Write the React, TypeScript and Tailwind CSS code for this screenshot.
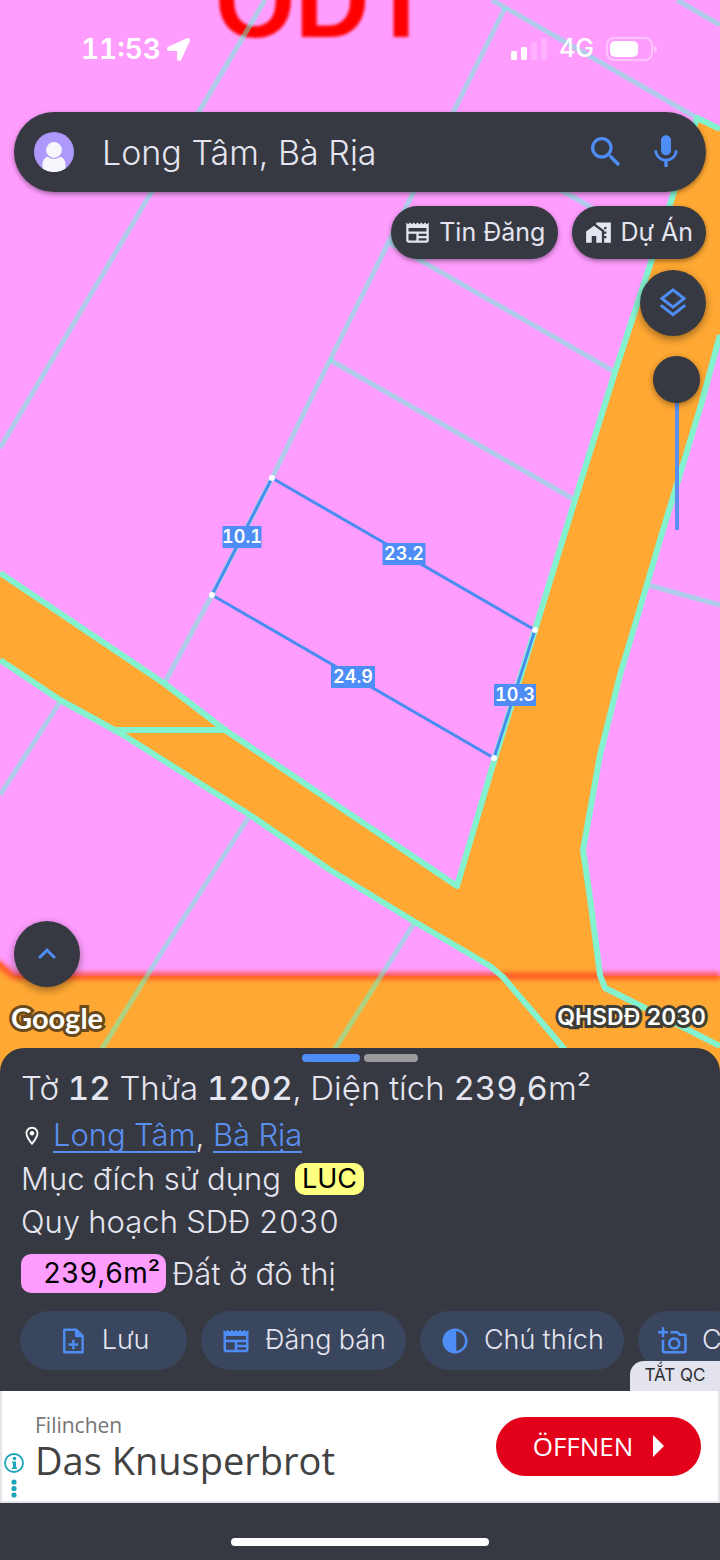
import type { ReactNode } from 'react';
import { FaLocationArrow } from 'react-icons/fa';
import {
  MdContrast,
  MdHomeWork,
  MdKeyboardArrowUp,
  MdMic,
  MdNewspaper,
  MdOutlineAddAPhoto,
  MdOutlineLayers,
  MdOutlineLocationOn,
  MdSearch,
} from 'react-icons/md';

const parcelLines = [
  'M265 0L0 448',
  'M505 8L330 360L272 478L212 595L165 682',
  'M492 0L697 118',
  'M677 0L720 25',
  'M447 125L657 245',
  'M390 243L615 372',
  'M330 360L575 500',
  'M60 702L0 795',
  'M250 815L160 955L100 1052',
  'M415 922L333 1052',
  'M648 585L720 605',
];

const roadEdges = [
  'M720 129L697 118L673 195L615 372L575 500L535 630L495 758L457 886L225 730L165 684L0 573',
  'M720 335L701 405L660 540L640 608L620 675L600 755L583 850L591 905L600 975L605 988L645 1008L720 1046',
  'M0 660L60 700L120 733L250 815L330 870L415 922L490 966L503 977L567 1052',
  'M112 730L228 730',
];

const corners = [
  [272, 478],
  [535, 630],
  [494, 758],
  [212, 595],
];

const sideLengths = [
  { x: 242, y: 537, w: 39, text: '10.1' },
  { x: 404, y: 554, w: 43, text: '23.2' },
  { x: 353, y: 677, w: 44, text: '24.9' },
  { x: 515, y: 695, w: 42, text: '10.3' },
];

function ParcelMap() {
  return (
    <svg
      className="absolute inset-0 h-full w-full"
      viewBox="0 0 720 1048"
      preserveAspectRatio="xMidYMin slice"
      role="img"
      aria-label="Bản đồ thửa đất"
    >
      <defs>
        <filter id="soft" x="-5%" y="-50%" width="110%" height="200%">
          <feGaussianBlur stdDeviation="2.5" />
        </filter>
        <filter id="softText">
          <feGaussianBlur stdDeviation="1.8" />
        </filter>
      </defs>
      <rect width="720" height="1080" fill="#ff9dff" />
      <text
        x="215"
        y="37"
        fontFamily="Liberation Sans, sans-serif"
        fontWeight="700"
        fontSize="103"
        fill="#ff0000"
        filter="url(#softText)"
      >
        ODT
      </text>
      <g fill="#ffa833">
        <path d="M697 118L720 129V335L701 405L660 540L640 608L620 675L600 755L583 850L591 905L600 975L610 1080H560L503 977L490 966L415 922L330 870L250 815L120 733L60 700L0 660V573L165 684L225 730L457 886L495 758L615 372L673 195Z" />
        <path d="M0 962L14 976H720V1080H0Z" />
      </g>
      <path d="M-10 960L0 965L14 976H720" fill="none" stroke="#ff4a28" strokeWidth="7" opacity="0.85" filter="url(#soft)" />
      <g fill="none" stroke="#5affd3" strokeOpacity="0.48" strokeWidth="5" strokeLinejoin="round">
        {parcelLines.map((d) => (
          <path key={d} d={d} />
        ))}
      </g>
      <g fill="none" stroke="#84f2cf" strokeWidth="6" strokeLinejoin="round">
        {roadEdges.map((d) => (
          <path key={d} d={d} />
        ))}
      </g>
      <path d="M272 478L535 630L494 758L212 595Z" fill="none" stroke="#4a8df0" strokeWidth="3" />
      {corners.map(([x, y]) => (
        <circle key={x} cx={x} cy={y} r="3" fill="#fff" />
      ))}
      {sideLengths.map((s) => (
        <g key={s.text}>
          <rect x={s.x - s.w / 2} y={s.y - 11} width={s.w} height="22" fill="#4f8df6" />
          <text
            x={s.x}
            y={s.y + 6}
            textAnchor="middle"
            fontFamily="Inter, sans-serif"
            fontWeight="600"
            fontSize="18"
            className="tabular-nums"
            fill="#fff"
          >
            {s.text}
          </text>
        </g>
      ))}
    </svg>
  );
}

function StatusBar() {
  return (
    <div className="flex h-[98px] items-center justify-between pr-[62px] pl-[81px] text-white">
      <div className="flex items-center gap-[6px]">
        <span className="text-[28px] font-semibold tabular-nums">11:53</span>
        <FaLocationArrow className="size-[23px]" />
      </div>
      <div className="flex items-center gap-3">
        <svg className="h-6 w-9" viewBox="0 0 36 24" fill="#fff">
          <rect x="0" y="14" width="6" height="9" rx="1.5" />
          <rect x="10" y="10" width="6" height="13" rx="1.5" />
          <rect x="20" y="5" width="6" height="18" rx="1.5" opacity="0.2" />
          <rect x="30" y="1" width="6" height="22" rx="1.5" opacity="0.2" />
        </svg>
        <span className="text-[25px] font-medium">4G</span>
        <svg className="h-6 w-[52px]" viewBox="0 0 52 24" fill="none">
          <rect x="1" y="1" width="45" height="22" rx="7" stroke="#fff" strokeOpacity="0.4" strokeWidth="2" />
          <rect x="4" y="4" width="28" height="16" rx="5" fill="#fff" />
          <path d="M48 8.500q3 1 3 3.500t-3 3.500z" fill="#fff" fillOpacity="0.4" />
        </svg>
      </div>
    </div>
  );
}

function SearchBar() {
  return (
    <form
      className="flex h-20 items-center rounded-full bg-[#363941] pr-6 pl-5 shadow-[0_2px_5px_rgba(0,0,0,0.4)]"
      onSubmit={(e) => e.preventDefault()}
    >
      <button type="button" aria-label="Tài khoản" className="size-10 shrink-0">
        <svg viewBox="0 0 40 40" className="size-10">
          <circle cx="20" cy="20" r="20" fill="#ae98fb" />
          <path
            d="M8.500 36.400V33C8.500 28 11 25 15 24.500C18 26.500 22 26.500 25 24.500C29 25 31.500 28 31.500 33V36.400A20 20 0 0 1 8.500 36.400Z"
            fill="#f7f6fc"
          />
          <circle cx="20" cy="18" r="8.500" fill="#f7f6fc" stroke="#ae98fb" strokeWidth="1.200" />
        </svg>
      </button>
      <input
        type="text"
        aria-label="Tìm kiếm địa điểm"
        defaultValue="Long Tâm, Bà Rịa"
        className="ml-7 min-w-0 flex-1 bg-transparent text-[34px] font-light text-[#e4e5f0] outline-none"
      />
      <div className="flex gap-6 text-[#4f8df6]">
        <button type="submit" aria-label="Tìm kiếm">
          <MdSearch className="size-10" />
        </button>
        <button type="button" aria-label="Tìm bằng giọng nói" className="flex w-8 items-center justify-center">
          <MdMic className="size-10 shrink-0" />
        </button>
      </div>
    </form>
  );
}

function MapChip({ icon, label }: { icon: ReactNode; label: string }) {
  return (
    <button
      type="button"
      className="flex h-[53px] items-center gap-2 rounded-full bg-[#363941] px-[13px] text-[25px] text-[#e4e5f0] shadow-[0_2px_5px_rgba(0,0,0,0.4)]"
    >
      {icon}
      {label}
    </button>
  );
}

const roundButton =
  'flex size-[66px] items-center justify-center rounded-full bg-[#363941] text-[#4f8df6] shadow-[0_3px_8px_rgba(0,0,0,0.4)]';

function MapArea() {
  return (
    <section className="relative flex flex-1 flex-col">
      <ParcelMap />
      <div className="relative flex flex-1 flex-col">
        <StatusBar />
        <div className="flex flex-1 flex-col px-[14px] pt-[14px]">
          <SearchBar />
          <div className="mt-[14px] flex justify-end gap-[14px]">
            <MapChip icon={<MdNewspaper className="size-[27px]" />} label="Tin Đăng" />
            <MapChip icon={<MdHomeWork className="size-[27px]" />} label="Dự Án" />
          </div>
          <div className="mt-[11px] flex flex-col items-end gap-5">
            <button type="button" aria-label="Lớp bản đồ" className={roundButton}>
              <MdOutlineLayers className="size-9" />
            </button>
            <input
              type="range"
              aria-label="Độ mờ lớp quy hoạch"
              min={0}
              max={100}
              defaultValue={0}
              className="mr-[6px] h-[174px] w-[47px] appearance-none bg-transparent bg-[linear-gradient(#5a8ff0,#5a8ff0)] bg-[length:4px_100%] bg-center bg-no-repeat [writing-mode:vertical-lr] [&::-webkit-slider-thumb]:size-[47px] [&::-webkit-slider-thumb]:appearance-none [&::-webkit-slider-thumb]:rounded-full [&::-webkit-slider-thumb]:bg-[#363941] [&::-webkit-slider-thumb]:shadow-[0_2px_6px_rgba(0,0,0,0.4)]"
            />
          </div>
          <div className="mt-auto">
            <button type="button" aria-label="Mở rộng" className={roundButton}>
              <MdKeyboardArrowUp className="size-9" />
            </button>
          </div>
        </div>
        <div className="flex h-[61px] items-center justify-between pr-[14px] pl-[11px] text-white">
          <span className="font-['Lato'] text-[29px] font-bold [-webkit-text-stroke:6px_#6a4a1c] [paint-order:stroke_fill]">
            Google
          </span>
          <span className="text-[23px] font-semibold tabular-nums [-webkit-text-stroke:6px_#3f3e36] [paint-order:stroke_fill]">
            QHSDĐ 2030
          </span>
        </div>
      </div>
    </section>
  );
}

function NoteAddIcon() {
  return (
    <svg className="size-[30px]" viewBox="0 0 24 24" fill="none" stroke="currentColor" strokeWidth="1.900" strokeLinejoin="round">
      <path d="M5 3H14.500L19.700 8V21H5Z" />
      <path d="M14.500 3V8H19.700Z" fill="currentColor" />
      <path d="M12.300 11V18.500M8.500 14.750H16.100" />
    </svg>
  );
}

function ActionButton({ icon, label }: { icon: ReactNode; label: string }) {
  return (
    <button
      type="button"
      className="flex h-[59px] shrink-0 items-center justify-center gap-[14px] rounded-full bg-[#3a465e] px-5 text-[27px] font-light text-[#e4e5f0] first:min-w-[167px]"
    >
      <span className="text-[#4f8df6]">{icon}</span>
      {label}
    </button>
  );
}

function ParcelSheet() {
  const link = 'border-b-2 border-[#5a8ff0] leading-[32px] text-[#5a8ff0]';
  return (
    <section className="relative bg-[#ffa833]">
      <div className="rounded-t-[24px] bg-[#363941] pt-[6px] pb-[21px] text-[31px] font-light text-[#e4e5f0] tabular-nums">
        <div className="flex justify-center gap-1">
          <span className="h-2 w-[58px] rounded-full bg-[#4f8df6]" />
          <span className="h-2 w-[54px] rounded-full bg-[#9c9a9d]" />
        </div>
        <div className="px-[21px]">
          <h1 className="text-[33px] leading-[52px] whitespace-nowrap">
            Tờ <b className="font-medium">12</b> Thửa <b className="font-medium">1202</b>, Diện tích{' '}
            <b className="font-normal">239,6</b>m²
          </h1>
          <p className="flex h-11 items-center">
            <MdOutlineLocationOn className="mr-[10px] size-[22px] text-white" />
            <a href="#long-tam" className={link}>
              Long Tâm
            </a>
            <span className="mr-[9px]">,</span>
            <a href="#ba-ria" className={link}>
              Bà Rịa
            </a>
          </p>
          <p className="flex h-[42px] items-center">
            Mục đích sử dụng
            <span className="ml-[14px] rounded-[10px] bg-[#ffff80] px-[7px] text-[27px] leading-8 font-normal text-black">
              LUC
            </span>
          </p>
          <p className="leading-[44px]">Quy hoạch SDĐ 2030</p>
          <p className="mt-[10px] flex items-center gap-[6px] leading-[39px]">
            <span className="rounded-[10px] bg-[#ff9dff] pr-[6px] pl-[22px] text-[28px] font-normal text-black">
              239,6m²
            </span>
            Đất ở đô thị
          </p>
        </div>
        <div className="mt-[18px] flex gap-[14px] overflow-hidden pl-5">
          <ActionButton icon={<NoteAddIcon />} label="Lưu" />
          <ActionButton icon={<MdNewspaper className="size-[30px]" />} label="Đăng bán" />
          <ActionButton icon={<MdContrast className="size-[30px]" />} label="Chú thích" />
          <ActionButton icon={<MdOutlineAddAPhoto className="size-[30px]" />} label="C" />
        </div>
      </div>
      <button
        type="button"
        className="absolute right-0 bottom-0 h-[30px] w-[90px] rounded-tl-[14px] bg-[#e3e3ee] text-[17px] text-[#2c2d33]"
      >
        TẮT QC
      </button>
    </section>
  );
}

function AdBanner() {
  return (
    <aside className="relative flex h-28 items-center justify-between border-2 border-t-0 border-[#e6e6ea] bg-white pr-[17px] pl-[33px] font-['Open_Sans']">
      <div className="text-[#424242]">
        <p className="text-[21px] leading-7 text-[#757575]">Filinchen</p>
        <p className="text-[38px] leading-[42px]">Das Knusperbrot</p>
      </div>
      <a
        href="#ad"
        className="flex h-[59px] w-[205px] items-center justify-center gap-5 rounded-full bg-[#e3001b] text-[26px] text-white"
      >
        ÖFFNEN
        <svg className="h-[22px] w-[11px]" viewBox="0 0 11 22" fill="#fff">
          <path d="M0 0L11 11L0 22Z" />
        </svg>
      </a>
      <button type="button" aria-label="Thông tin quảng cáo" className="absolute bottom-0.5 left-[2px]">
        <svg className="h-[46px] w-5" viewBox="0 0 20 46" fill="#1ba5b8">
          <circle cx="10" cy="10" r="9" fill="none" stroke="#1ba5b8" strokeWidth="1.800" />
          <circle cx="10.500" cy="5.500" r="1.800" />
          <path d="M8 8.500h4v6h1v1.500h-5v-1.500h1v-4.500h-1z" />
          <circle cx="10" cy="29" r="2.600" />
          <circle cx="10" cy="35.500" r="2.600" />
          <circle cx="10" cy="42" r="2.600" />
        </svg>
      </button>
    </aside>
  );
}

export default function App() {
  return (
    <main className="flex min-h-screen flex-col overflow-hidden bg-[#363941] font-['Inter',sans-serif]">
      <MapArea />
      <ParcelSheet />
      <AdBanner />
      <footer className="flex h-[57px] items-end justify-center pb-[14px]">
        <span className="h-2 w-[258px] rounded-full bg-white" />
      </footer>
    </main>
  );
}
